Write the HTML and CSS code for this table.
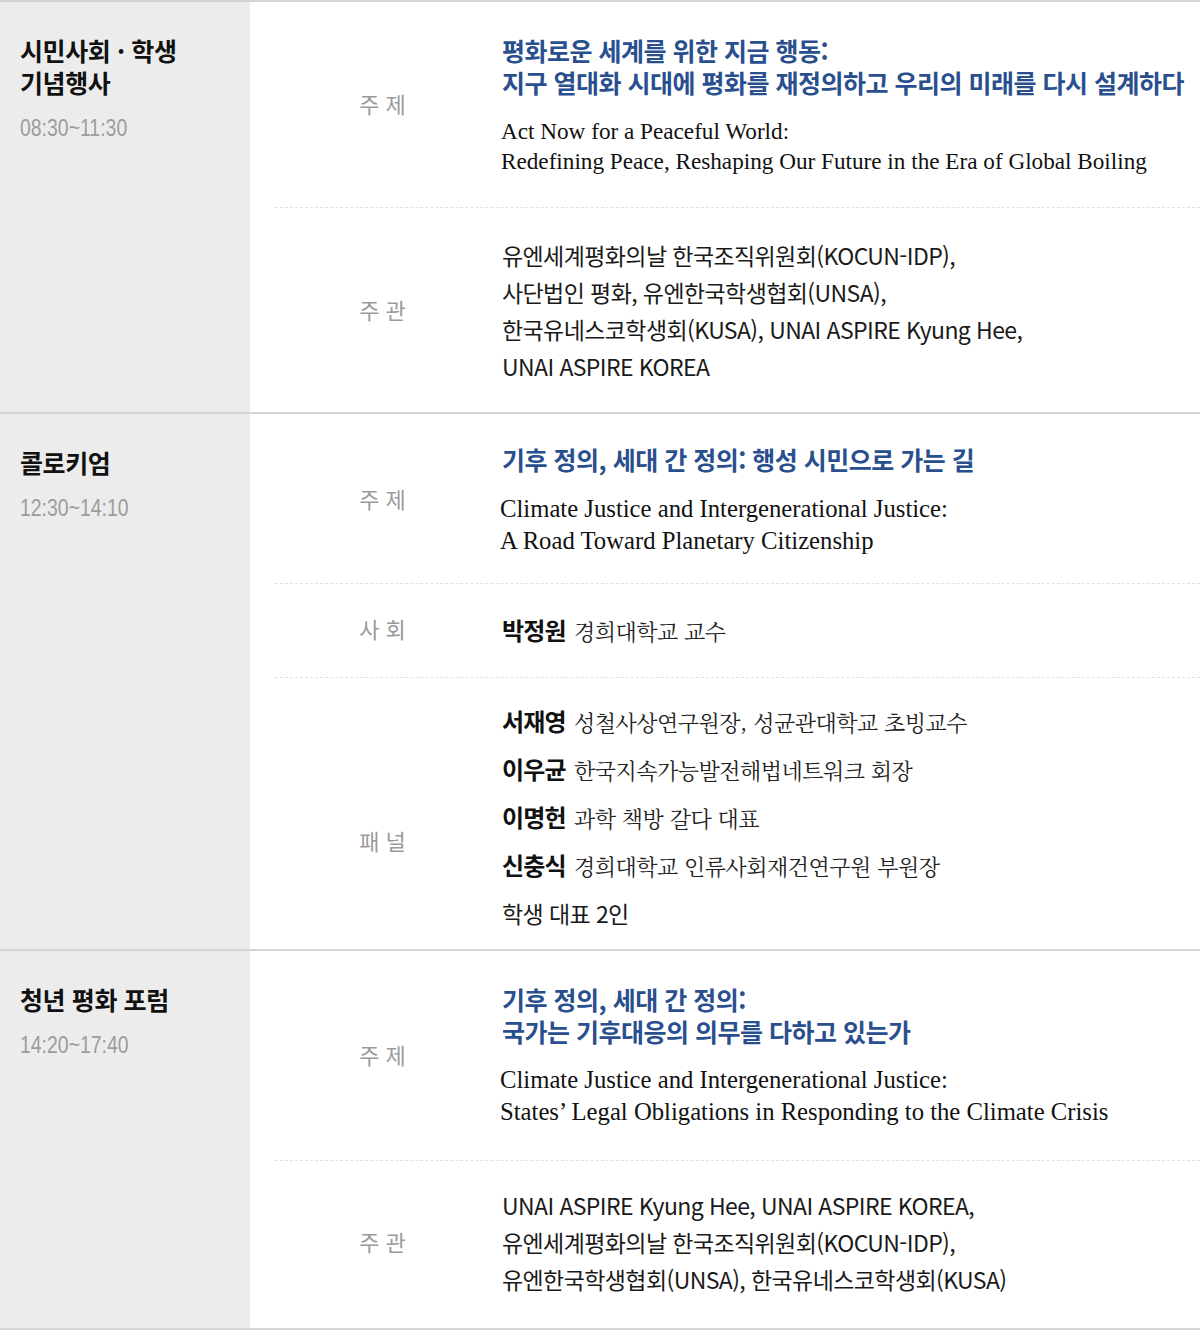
FILE: index.html
```html
<!DOCTYPE html>
<html lang="ko">
<head>
<meta charset="utf-8">
<title>프로그램</title>
<link rel="stylesheet" href="styles.css">
</head>
<body>
<div class="program">
  <section class="session">
    <div class="session-head">
      <h2 class="session-title">시민사회 · 학생<br>기념행사</h2>
      <p class="session-time"><span class="time-text">08:30~11:30</span></p>
    </div>
    <div class="session-body">
      <div class="item item-theme">
        <div class="label">주 제</div>
        <div class="content">
          <h3 class="theme-ko">평화로운 세계를 위한 지금 행동:<br>지구 열대화 시대에 평화를 재정의하고 우리의 미래를 다시 설계하다</h3>
          <p class="theme-en">Act Now for a Peaceful World:<br>Redefining Peace, Reshaping Our Future in the Era of Global Boiling</p>
        </div>
      </div>
      <div class="item item-org">
        <div class="label">주 관</div>
        <div class="content">
          <p class="org">유엔세계평화의날 한국조직위원회(KOCUN-IDP),<br>사단법인 평화, 유엔한국학생협회(UNSA),<br>한국유네스코학생회(KUSA), UNAI ASPIRE Kyung Hee,<br>UNAI ASPIRE KOREA</p>
        </div>
      </div>
    </div>
  </section>

  <section class="session">
    <div class="session-head">
      <h2 class="session-title">콜로키엄</h2>
      <p class="session-time"><span class="time-text">12:30~14:10</span></p>
    </div>
    <div class="session-body">
      <div class="item item-theme item-theme-short">
        <div class="label">주 제</div>
        <div class="content">
          <h3 class="theme-ko">기후 정의, 세대 간 정의: 행성 시민으로 가는 길</h3>
          <p class="theme-en theme-en-large">Climate Justice and Intergenerational Justice:<br>A Road Toward Planetary Citizenship</p>
        </div>
      </div>
      <div class="item item-host">
        <div class="label">사 회</div>
        <div class="content">
          <p class="person"><strong class="name">박정원</strong> <span class="role">경희대학교 교수</span></p>
        </div>
      </div>
      <div class="item item-panel">
        <div class="label label-panel">패 널</div>
        <div class="content">
          <ul class="people">
            <li class="person"><strong class="name">서재영</strong> <span class="role">성철사상연구원장, 성균관대학교 초빙교수</span></li>
            <li class="person"><strong class="name">이우균</strong> <span class="role">한국지속가능발전해법네트워크 회장</span></li>
            <li class="person"><strong class="name">이명헌</strong> <span class="role">과학 책방 갈다 대표</span></li>
            <li class="person"><strong class="name">신충식</strong> <span class="role">경희대학교 인류사회재건연구원 부원장</span></li>
            <li class="person person-plain">학생 대표 2인</li>
          </ul>
        </div>
      </div>
    </div>
  </section>

  <section class="session session-last">
    <div class="session-head">
      <h2 class="session-title">청년 평화 포럼</h2>
      <p class="session-time"><span class="time-text">14:20~17:40</span></p>
    </div>
    <div class="session-body">
      <div class="item item-theme item-theme-3">
        <div class="label">주 제</div>
        <div class="content">
          <h3 class="theme-ko">기후 정의, 세대 간 정의:<br>국가는 기후대응의 의무를 다하고 있는가</h3>
          <p class="theme-en theme-en-large theme-en-3">Climate Justice and Intergenerational Justice:<br>States’ Legal Obligations in Responding to the Climate Crisis</p>
        </div>
      </div>
      <div class="item item-org item-org-3">
        <div class="label">주 관</div>
        <div class="content">
          <p class="org">UNAI ASPIRE Kyung Hee, UNAI ASPIRE KOREA,<br>유엔세계평화의날 한국조직위원회(KOCUN-IDP),<br>유엔한국학생협회(UNSA), 한국유네스코학생회(KUSA)</p>
        </div>
      </div>
    </div>
  </section>
</div>
</body>
</html>
```

FILE: styles.css
```css
* {
  box-sizing: border-box;
}

html, body {
  margin: 0;
  padding: 0;
  background: #ffffff;
}

body {
  font-family: "Noto Sans CJK KR", "Noto Sans", sans-serif;
  color: #111111;
}

.program {
  width: 1200px;
}

.session {
  display: grid;
  grid-template-columns: 250px 1fr;
  border-top: 2px solid #d4d4d4;
}

.session-last {
  border-bottom: 2px solid #d4d4d4;
}

.session-head {
  background: #ececec;
  padding: 32px 0 0 20px;
}

.session-title {
  margin: 0;
  font-size: 25px;
  line-height: 32px;
  font-weight: 700;
  letter-spacing: -0.4px;
  color: #111111;
}

.session-time {
  margin: 15px 0 0;
  font-family: "Liberation Sans", "Noto Sans", sans-serif;
  font-size: 24px;
  line-height: 30px;
  color: #9c9c9c;
}

.time-text {
  display: inline-block;
  transform: scaleX(0.81);
  transform-origin: left center;
}

.session-body {
  padding-left: 25px;
}

.item {
  display: flex;
  align-items: center;
  border-bottom: 1px dashed #e2e2e2;
}

.item:last-child {
  border-bottom: none;
}

.label {
  flex: 0 0 215px;
  text-align: center;
  font-size: 22px;
  line-height: 30px;
  padding-bottom: 4px;
  color: #9a9a9a;
}

.label-panel {
  padding-top: 46px;
  padding-bottom: 0;
}

.content {
  flex: 1;
  padding-left: 12px;
}

.item-theme {
  padding: 32px 0 31px;
}

.item-theme-short {
  padding: 29px 0 26px;
}

.item-theme-3 {
  padding: 32px 0 32px;
}

.theme-ko {
  margin: 0;
  font-size: 25px;
  line-height: 32px;
  font-weight: 700;
  letter-spacing: -0.5px;
  color: #2a4f8f;
}

.theme-en {
  margin: 18px 0 0 -1px;
  font-family: "Liberation Serif", "DejaVu Serif", serif;
  font-size: 23.2px;
  line-height: 30px;
  color: #111111;
}

.theme-en-large {
  margin: 18px 0 0 -2px;
  font-size: 24.7px;
  line-height: 32px;
}

.theme-en-3 {
  margin-top: 17px;
}

.item-org {
  padding: 29px 0 27px;
}

.item-org-3 {
  padding: 26px 0 30px;
}

.org {
  margin: 0;
  font-size: 23px;
  line-height: 37px;
  letter-spacing: -0.6px;
  color: #1a1a1a;
}

.item-host {
  padding: 29px 0 30px;
}

.item-panel {
  padding: 19px 0 12px;
}

.people {
  list-style: none;
  margin: 0;
  padding: 0;
}

.person {
  margin: 0;
  font-size: 22px;
  line-height: 33px;
  white-space: nowrap;
}

.people .person {
  line-height: 48px;
  height: 48px;
}

.name {
  font-weight: 700;
  font-size: 24px;
  line-height: 1;
  letter-spacing: -0.8px;
  margin-right: 2px;
  color: #111111;
}

.role {
  font-family: "Noto Serif CJK KR", "Noto Sans CJK KR", serif;
  font-weight: 400;
  font-size: 22px;
  line-height: 1;
  letter-spacing: -0.5px;
  color: #222222;
}

.person-plain {
  font-size: 23px;
  letter-spacing: -0.6px;
  color: #1a1a1a;
}
```
